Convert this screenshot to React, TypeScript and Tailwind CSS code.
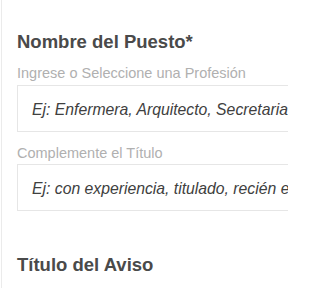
export default function App() {
  return (
    <div className="h-[288px] w-[288px] overflow-hidden bg-white font-['Liberation_Sans',Arial,sans-serif]">
      <div className="ml-[1px] h-full w-[420px] border-l border-[#ebebeb] pl-[15px] pt-[31px]">
        <h2 className="text-[18.5px] font-bold leading-[22px] text-[#4a4a4a]">Nombre del Puesto*</h2>
        <label className="mt-[12px] block text-[14.5px] leading-[17px] text-[#b0b0b0]">
          Ingrese o Seleccione una Profesión
        </label>
        <div className="mt-[3px] flex h-[47px] items-center border border-[#e6e6e6] pl-[14px] pt-[3px]">
          <span className="whitespace-nowrap text-[15.75px] leading-[20px] italic text-[#404040]">
            Ej: Enfermera, Arquitecto, Secretaria, Vendedor
          </span>
        </div>
        <label className="mt-[13px] block text-[14.5px] leading-[17px] text-[#b0b0b0]">Complemente el Título</label>
        <div className="mt-[2px] flex h-[47px] items-center border border-[#e6e6e6] pl-[14px] pt-[3px]">
          <span className="whitespace-nowrap text-[15.75px] leading-[20px] italic text-[#404040]">
            Ej: con experiencia, titulado, recién egresado
          </span>
        </div>
        <h2 className="mt-[43px] text-[18.5px] font-bold leading-[22px] text-[#4a4a4a]">Título del Aviso</h2>
      </div>
    </div>
  );
}
